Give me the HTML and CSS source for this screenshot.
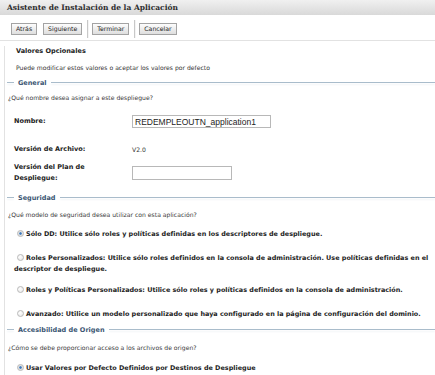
FILE: index.html
```html
<!DOCTYPE html>
<html lang="es">
<head>
    <meta charset="UTF-8">
    <title>Asistente de Instalación de la Aplicación</title>
    <link rel="stylesheet" href="styles.css">
</head>
<body>
    <div class="title-bar">Asistente de Instalación de la Aplicación</div>

    <div class="toolbar">
        <button class="btn">Atrás</button>
        <button class="btn">Siguiente</button>
        <span class="sep"></span>
        <button class="btn">Terminar</button>
        <span class="sep"></span>
        <button class="btn">Cancelar</button>
    </div>

    <div class="content">
        <div class="page-title">Valores Opcionales</div>
        <div class="page-hint">Puede modificar estos valores o aceptar los valores por defecto</div>

        <!-- General -->
        <div class="legend legend-general"><span>General</span></div>
        <div class="question q-general">¿Qué nombre desea asignar a este despliegue?</div>
        <div class="field field-name">
            <label>Nombre:</label>
            <input class="text-input wide" type="text" value="REDEMPLEOUTN_application1">
        </div>
        <div class="field field-version">
            <label>Versión de Archivo:</label>
            <span class="value">V2.0</span>
        </div>
        <div class="field field-plan">
            <label>Versión del Plan de<br>Despliegue:</label>
            <input class="text-input narrow" type="text" value="">
        </div>

        <!-- Seguridad -->
        <div class="legend legend-security"><span>Seguridad</span></div>
        <div class="question q-security">¿Qué modelo de seguridad desea utilizar con esta aplicación?</div>
        <div class="option opt-1"><span class="radio checked"></span>Sólo DD: Utilice sólo roles y políticas definidas en los descriptores de despliegue.</div>
        <div class="option opt-2"><span class="radio"></span>Roles Personalizados: Utilice sólo roles definidos en la consola de administración. Use políticas definidas en el descriptor de despliegue.</div>
        <div class="option opt-3"><span class="radio"></span>Roles y Políticas Personalizados: Utilice sólo roles y políticas definidos en la consola de administración.</div>
        <div class="option opt-4"><span class="radio"></span>Avanzado: Utilice un modelo personalizado que haya configurado en la página de configuración del dominio.</div>

        <!-- Accesibilidad de Origen -->
        <div class="legend legend-source"><span>Accesibilidad de Origen</span></div>
        <div class="question q-source">¿Cómo se debe proporcionar acceso a los archivos de origen?</div>
        <div class="option opt-5"><span class="radio checked"></span>Usar Valores por Defecto Definidos por Destinos de Despliegue</div>
    </div>
</body>
</html>
```

FILE: styles.css
```css
:root {
    --text-color: #333;
    --label-color: #222;
    --legend-color: #3b5673;
    --legend-line: #a9bccb;
    --border-light: #e2e2e2;
}

* {
    margin: 0;
    padding: 0;
    box-sizing: border-box;
}

body {
    width: 435px;
    height: 375px;
    overflow: hidden;
    background: #fff;
    color: var(--text-color);
    font-family: 'DejaVu Sans', Verdana, sans-serif;
    font-size: 6.1px;
}

/* Title bar */
.title-bar {
    height: 15px;
    line-height: 15px;
    padding-left: 7px;
    background: linear-gradient(to bottom, #f0f0f0 0%, #d9d9d9 100%);
    font-family: 'DejaVu Serif', Georgia, serif;
    font-weight: bold;
    font-size: 7.5px;
    color: #2e2e2e;
}

/* Buttons */
.toolbar {
    display: flex;
    align-items: center;
    height: 26px;
    padding: 2px 0 0 11px;
    border-bottom: 1px solid var(--border-light);
}

.btn {
    height: 12px;
    padding: 0 4px;
    margin-right: 6px;
    border: 1px solid #a3a3a3;
    background: linear-gradient(to bottom, #fdfdfd 0%, #dedede 100%);
    font-family: 'DejaVu Sans', Verdana, sans-serif;
    font-size: 6.2px;
    color: #222;
}

.sep {
    width: 2px;
    height: 18px;
    margin: 0 3px 0 -1px;
    border-left: 1px solid #c8c8c8;
    border-right: 1px solid #f4f4f4;
}

/* Main panel */
.content {
    margin-left: 4px;
    border-left: 1px solid var(--border-light);
    height: 334px;
}

.page-title {
    margin-top: 5px;
    padding-left: 11px;
    line-height: 11px;
    font-weight: bold;
    font-size: 6.5px;
    color: var(--label-color);
}

.page-hint {
    margin-top: 5px;
    padding-left: 11px;
    line-height: 11px;
}

.legend {
    display: flex;
    align-items: center;
    gap: 4px;
    height: 11px;
    padding-left: 2px;
    font-weight: bold;
    font-size: 6.5px;
    color: var(--legend-color);
}

.legend::before,
.legend::after {
    content: "";
    height: 1px;
    background: var(--legend-line);
    box-shadow: 0 2px 2px #eef2f5;
}

.legend::before {
    width: 7px;
}

.legend::after {
    flex: 1;
}

.legend-general { margin-top: 4px; }
.legend-security { margin-top: 8px; }
.legend-source { margin-top: 4px; }

.question {
    padding-left: 3px;
    line-height: 11px;
    color: #3a3a3a;
}

.q-general { margin-top: 4px; }
.q-security { margin-top: 6px; }
.q-source { margin-top: 7px; }

/* Form fields */
.field {
    display: grid;
    grid-template-columns: 118px 1fr;
    align-items: center;
    padding-left: 9px;
}

.field label {
    font-weight: bold;
    font-size: 6.5px;
    line-height: 11px;
    color: var(--label-color);
}

.field-name {
    margin-top: 12px;
    height: 13px;
}

.field-version {
    margin-top: 16px;
    height: 11px;
    line-height: 11px;
}

.field-plan {
    margin-top: 7px;
    height: 22px;
    align-items: start;
}

.text-input {
    height: 13px;
    border: 1px solid #b8b8b8;
    padding: 0 2px;
    font-family: 'Liberation Sans', Arial, sans-serif;
    font-size: 8.5px;
    color: #222;
    outline: none;
}

.wide {
    width: 139px;
}

.narrow {
    width: 100px;
    height: 14px;
    margin-top: 4px;
}

/* Radio options */
.option {
    padding-left: 9px;
    line-height: 11px;
    font-weight: bold;
    font-size: 6.45px;
    color: var(--label-color);
}

.radio {
    display: inline-block;
    width: 7px;
    height: 7px;
    margin: 0 2px 0 3px;
    vertical-align: -1px;
    border: 1px solid #b9b9b9;
    border-radius: 50%;
    background: radial-gradient(circle at 40% 35%, #ffffff 0%, #e4e4e4 100%);
}

.radio.checked {
    background: radial-gradient(circle, #3f78b8 0%, #5b8fc9 30%, #dcdcdc 45%, #f2f2f2 100%);
}

.opt-1 { margin-top: 9px; }
.opt-2 { margin-top: 13px; }
.opt-3 { margin-top: 10px; }
.opt-4 { margin-top: 13px; }
.opt-5 { margin-top: 10px; }
```
